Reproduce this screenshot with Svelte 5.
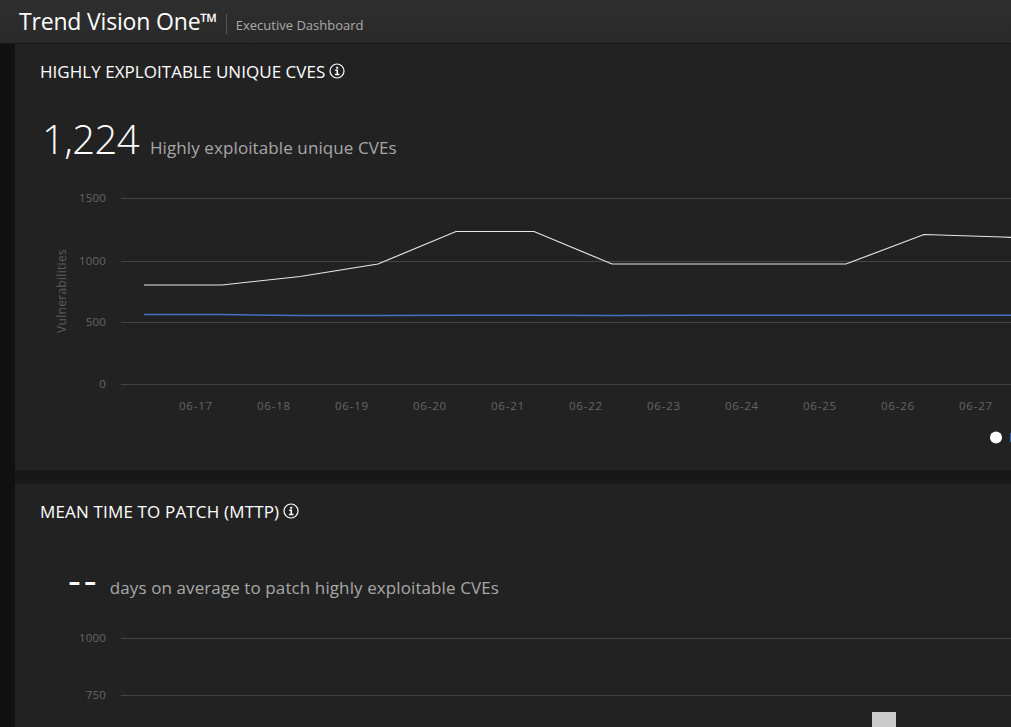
<script lang="ts">
	const dates = ['06-17', '06-18', '06-19', '06-20', '06-21', '06-22', '06-23', '06-24', '06-25', '06-26', '06-27'];

	// chart coordinates are relative to the svg, which starts at x=15 in the card
	const whiteLine = [
		[129, 92], [207, 92], [285, 83.5], [363, 71], [441, 38.5], [519, 38.5], [597, 71],
		[675, 71], [753, 71], [831, 71], [909, 41.5], [987, 44], [1000, 44.5]
	];
	const blueLine = [
		[129, 121.5], [207, 121.5], [285, 122.6], [363, 122.6], [441, 122.3], [519, 122.3], [597, 122.6],
		[675, 122.3], [753, 122.3], [831, 122.3], [909, 122.3], [987, 122.3], [1000, 122.3]
	];
	const toPoints = (pts: number[][]) => pts.map((p) => p.join(',')).join(' ');

	const upperTicks = [
		{ label: '1500', y: 5 },
		{ label: '1000', y: 68 },
		{ label: '500', y: 129 },
		{ label: '0', y: 191 }
	];
	const lowerTicks = [
		{ label: '1000', y: 5 },
		{ label: '750', y: 62 }
	];
</script>

<div class="page">
	<header class="topbar">
		<span class="product">Trend Vision One™</span>
		<span class="divider"></span>
		<span class="crumb">Executive Dashboard</span>
	</header>

	<main class="content">
		<section class="card first">
			<h2 class="card-title">
				HIGHLY EXPLOITABLE UNIQUE CVES
				<svg class="info" viewBox="0 0 16 16" width="16" height="16">
					<circle cx="8" cy="8" r="7" fill="none" stroke="#fff" stroke-width="1.2" />
					<path d="M6.2 7.3H8.3V11M5.9 11.4h4.6" fill="none" stroke="#fff" stroke-width="1.5" />
					<rect x="7.2" y="3.8" width="2" height="1.9" fill="#fff" />
				</svg>
			</h2>
			<div class="stat">
				<span class="stat-value">1,224</span>
				<span class="stat-label">Highly exploitable unique CVEs</span>
			</div>
			<svg class="chart tall" width="996" height="265" viewBox="0 -10 996 265">
				{#each upperTicks as tick}
					<line class="grid" x1="106" x2="996" y1={tick.y + 0.5} y2={tick.y + 0.5} />
					<text class="tick" x="91" y={tick.y + 4} text-anchor="end">{tick.label}</text>
				{/each}
				<text class="axis-title" transform="translate(51 98) rotate(-90)" text-anchor="middle">Vulnerabilities</text>
				{#each dates as date, i}
					<text class="tick date" x={181 + i * 78} y="217" text-anchor="middle">{date}</text>
				{/each}
				<polyline class="line" points={toPoints(whiteLine)} stroke="#e8e8e8" />
				<polyline class="line blue" points={toPoints(blueLine)} stroke="#4472c4" />
				<circle cx="981" cy="244.5" r="6" fill="#fff" />
				<text class="legend" x="994.5" y="249">Highly exploitable</text>
			</svg>
		</section>

		<section class="card second">
			<h2 class="card-title">
				MEAN TIME TO PATCH (MTTP)
				<svg class="info" viewBox="0 0 16 16" width="16" height="16">
					<circle cx="8" cy="8" r="7" fill="none" stroke="#fff" stroke-width="1.2" />
					<path d="M6.2 7.3H8.3V11M5.9 11.4h4.6" fill="none" stroke="#fff" stroke-width="1.5" />
					<rect x="7.2" y="3.8" width="2" height="1.9" fill="#fff" />
				</svg>
			</h2>
			<div class="stat indented">
				<span class="stat-value dashes">--</span>
				<span class="stat-label">days on average to patch highly exploitable CVEs</span>
			</div>
			<svg class="chart" width="996" height="104" viewBox="0 -10 996 104">
				{#each lowerTicks as tick}
					<line class="grid" x1="106" x2="996" y1={tick.y + 0.5} y2={tick.y + 0.5} />
					<text class="tick" x="91" y={tick.y + 4} text-anchor="end">{tick.label}</text>
				{/each}
				<rect x="857" y="79" width="24" height="21" fill="#cccccc" />
			</svg>
		</section>
	</main>
</div>

<style>
	:global(body) {
		margin: 0;
		background: #141414;
	}

	.page {
		height: 727px;
		overflow: hidden;
		display: flex;
		flex-direction: column;
		font-family: 'Open Sans', 'Noto Sans', sans-serif;
	}

	.topbar {
		flex: none;
		box-sizing: border-box;
		height: 44px;
		display: flex;
		align-items: center;
		padding-left: 19px;
		background: linear-gradient(180deg, #2e2e2e 0%, #2a2a2a 100%);
		border-bottom: 1px solid #161616;
	}

	.product {
		color: #fff;
		font-size: 23px;
		letter-spacing: -0.18px;
		line-height: 1;
		margin-top: -1px;
	}

	.divider {
		width: 1px;
		height: 20px;
		background: #555;
		margin: 4px 9px 0 8px;
	}

	.crumb {
		color: #aaa;
		font-size: 13px;
		margin-top: 6px;
	}

	.content {
		flex: 1;
		min-height: 0;
		display: flex;
		flex-direction: column;
		gap: 14px;
		padding-left: 15px;
		background: #181818;
		box-shadow: inset 15px 0 0 #111;
	}

	.card {
		background: #222;
		overflow: hidden;
	}

	.first {
		flex: none;
		height: 426px;
		padding-top: 16px;
		box-sizing: border-box;
	}

	.second {
		flex: 1;
		padding-top: 16px;
	}

	.card-title {
		margin: 0;
		padding-left: 25px;
		display: flex;
		align-items: center;
		gap: 4px;
		height: 22px;
		color: #fff;
		font-size: 17px;
		font-weight: 400;
		letter-spacing: 0.04px;
		white-space: nowrap;
	}

	.second .card-title {
		letter-spacing: 0.16px;
	}

	.stat {
		display: flex;
		align-items: baseline;
		gap: 11px;
		padding-left: 27px;
		margin-top: 32px;
		height: 50px;
	}

	.indented {
		padding-left: 53px;
		margin-top: 36px;
		height: 42px;
		gap: 10px;
	}

	.stat-value {
		color: #fff;
		font-size: 40px;
		font-weight: 300;
		letter-spacing: -0.6px;
		line-height: 50px;
	}

	.dashes {
		font-weight: 400;
		line-height: 42px;
		letter-spacing: 3px;
	}

	.stat-label {
		color: #a8a8a8;
		font-size: 17px;
		letter-spacing: 0.1px;
		white-space: nowrap;
	}

	.chart {
		display: block;
		margin-top: 23px;
	}

	.tall {
		margin-top: 19px;
	}

	.grid {
		stroke: #444;
		stroke-width: 1;
	}

	.tick {
		fill: #666;
		font-size: 11.5px;
		letter-spacing: 0.2px;
	}

	.date {
		letter-spacing: 0.8px;
	}

	.axis-title {
		fill: #5c5c5c;
		font-size: 12px;
		letter-spacing: 0.3px;
	}

	.legend {
		fill: #cfe4ff;
		font-size: 13px;
	}

	.line {
		fill: none;
		stroke-width: 1.15;
	}

	.blue {
		stroke-width: 1.5;
	}
</style>
